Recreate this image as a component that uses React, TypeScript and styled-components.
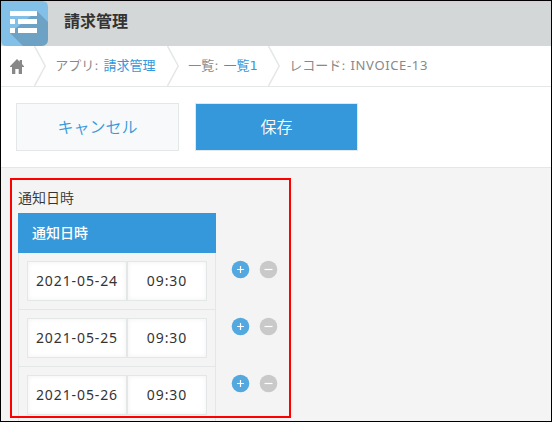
import React from "react";
import styled, { createGlobalStyle, css } from "styled-components";

const GlobalStyle = createGlobalStyle`
  *, *::before, *::after { box-sizing: border-box; }
  html, body { margin: 0; padding: 0; overflow: hidden; }
  body { font-family: "DejaVu Sans", "Noto Sans CJK JP", sans-serif; color: #333; }
`;

const Window = styled.div`
  position: relative;
  display: flex;
  flex-direction: column;
  width: 552px;
  height: 422px;
  border: 1px solid #000;
  background: #f4f4f4;
  overflow: hidden;
`;

const Header = styled.header`
  display: flex;
  align-items: center;
  flex: none;
  height: 45px;
  background: #d3d7d7;
  box-shadow: inset 0 2px #d7d2d8;
`;

const AppIcon = styled.svg`
  display: block;
  flex: none;
  width: 47px;
  height: 45px;
`;

const Title = styled.h1`
  margin: 0 0 4px 16px;
  font-size: 16px;
  line-height: 24px;
  font-weight: 700;
  color: #333;
`;

const Breadcrumbs = styled.nav`
  display: flex;
  flex: none;
  height: 41px;
  background: #fff;
  border-bottom: 1px solid #e3e7e8;
`;

const Crumb = styled.div<{ $width: number }>`
  display: flex;
  align-items: center;
  flex: none;
  width: ${(p) => p.$width}px;
  font-size: 13px;
  line-height: 20px;
  white-space: pre;
  color: #888;
`;

const CrumbLink = styled.a`
  margin-left: 0.7px;
  color: #3498db;
`;

const CrumbCode = styled.span`
  margin-left: 0.7px;
  padding-bottom: 2px;
  font-family: "Noto Sans", sans-serif;
  letter-spacing: 0.65px;
`;

const Chevron = styled.svg`
  display: block;
  flex: none;
  width: 13px;
  height: 40px;
  fill: none;
  stroke: #e3e7e8;
  stroke-width: 1.5;
`;

const HomeIcon = styled.svg`
  width: 14px;
  height: 15px;
  margin: 0 0 0 9px;
  fill: #888;
`;

const Actions = styled.div`
  display: flex;
  flex: none;
  gap: 16px;
  height: 81px;
  padding: 16px 15px;
  background: #fff;
  border-bottom: 1px solid #e3e7e8;
`;

const Button = styled.button<{ $primary?: boolean }>`
  width: 163px;
  height: 48px;
  padding: 0 0 2px;
  border: 1px solid #e3e7e8;
  background: #f7f9fa;
  color: #3498db;
  font: 350 16px/44px "Noto Sans CJK JP", sans-serif;
  ${(p) =>
    p.$primary &&
    css`
      background: #3498db;
      color: #fff;
    `}
`;

const Content = styled.main`
  flex: none;
  padding: 19px 0 0 17px;
`;

const FieldLabel = styled.div`
  height: 26px;
  font: 350 14px/20px "Noto Sans CJK JP", sans-serif;
`;

const TableHead = styled.div`
  width: 198px;
  height: 40px;
  padding-left: 14px;
  background: #3498db;
  color: #fff;
  font-size: 14px;
  line-height: 40px;
  font-weight: 500;
`;

const Row = styled.div`
  display: flex;
  height: 57px;
`;

const Cell = styled.div`
  display: flex;
  width: 198px;
  padding: 8px;
  border: 1px solid #e3e7e8;
  border-top: 0;
`;

const Field = styled.div<{ $width: number }>`
  width: ${(p) => p.$width}px;
  height: 40px;
  border: 1px solid #e3e7e8;
  background: #fff;
  box-shadow: inset 0 0 5px #f1f1f1;
  font-family: "Noto Sans", sans-serif;
  font-size: 14px;
  letter-spacing: 0.9px;
  line-height: 37px;
  text-align: center;
  white-space: nowrap;
`;

const RowTools = styled.div`
  display: flex;
  gap: 9px;
  padding: 7px 0 0 15px;
`;

const ToolIcon = styled.svg<{ $color: string }>`
  display: block;
  width: 19px;
  height: 19px;
  stroke: #fff;
  stroke-width: 1.2;
  circle {
    fill: ${(p) => p.$color};
    stroke: none;
  }
`;

const Highlight = styled.div`
  position: absolute;
  left: 9px;
  top: 177px;
  width: 281px;
  height: 240px;
  border: 2px solid #f00;
  pointer-events: none;
`;

const dates = ["2021-05-24", "2021-05-25", "2021-05-26"];

const Separator = () => (
  <Chevron viewBox="0 0 13 40">
    <path d="M0.5 0L11.2 20L0.5 40" />
  </Chevron>
);

export default function App() {
  return (
    <>
      <GlobalStyle />
      <Window>
        <Header>
          <AppIcon viewBox="0 0 47 45">
            <path d="M0 0H41Q47 0 47 6V38Q47 45 40 45H6Q0 45 0 39Z" fill="#82c0e7" />
            <path d="M36 10L47 21V38Q47 45 40 45H22L9 32Z" fill="#6da2c5" />
            <path
              d="M9 10H36V15H9ZM9 18H14V23H9ZM17 18H36V23H17ZM9 27H14V32H9ZM17 27H36V32H17Z"
              fill="#fff"
            />
          </AppIcon>
          <Title>請求管理</Title>
        </Header>
        <Breadcrumbs>
          <Crumb $width={33}>
            <HomeIcon viewBox="0 0 14 15">
              <path d="M7 0L9.7 2.8V1H12V5.1L14 7.3V8H12V15H8.7V10H5.3V15H2V8H0V7.3Z" />
            </HomeIcon>
          </Crumb>
          <Separator />
          <Crumb $width={120}>
            <span>  アプリ: </span>
            <CrumbLink>請求管理</CrumbLink>
          </Crumb>
          <Separator />
          <Crumb $width={88}>
            <span>  一覧: </span>
            <CrumbLink>一覧1</CrumbLink>
          </Crumb>
          <Separator />
          <Crumb $width={160}>
            <span>  レコード: </span>
            <CrumbCode>INVOICE-13</CrumbCode>
          </Crumb>
        </Breadcrumbs>
        <Actions>
          <Button>キャンセル</Button>
          <Button $primary>保存</Button>
        </Actions>
        <Content>
          <FieldLabel>通知日時</FieldLabel>
          <TableHead>通知日時</TableHead>
          {dates.map((date) => (
            <Row key={date}>
              <Cell>
                <Field $width={100}>{date}</Field>
                <Field $width={80}>09:30</Field>
              </Cell>
              <RowTools>
                <ToolIcon viewBox="0 0 19 19" $color="#54a8e0">
                  <circle cx="9.5" cy="9.5" r="8.8" />
                  <path d="M6 9.5H13M9.5 6V13" />
                </ToolIcon>
                <ToolIcon viewBox="0 0 19 19" $color="#c9c9c9">
                  <circle cx="9.5" cy="9.5" r="8.8" />
                  <path d="M5.5 9.5H13.5" />
                </ToolIcon>
              </RowTools>
            </Row>
          ))}
        </Content>
        <Highlight />
      </Window>
    </>
  );
}
